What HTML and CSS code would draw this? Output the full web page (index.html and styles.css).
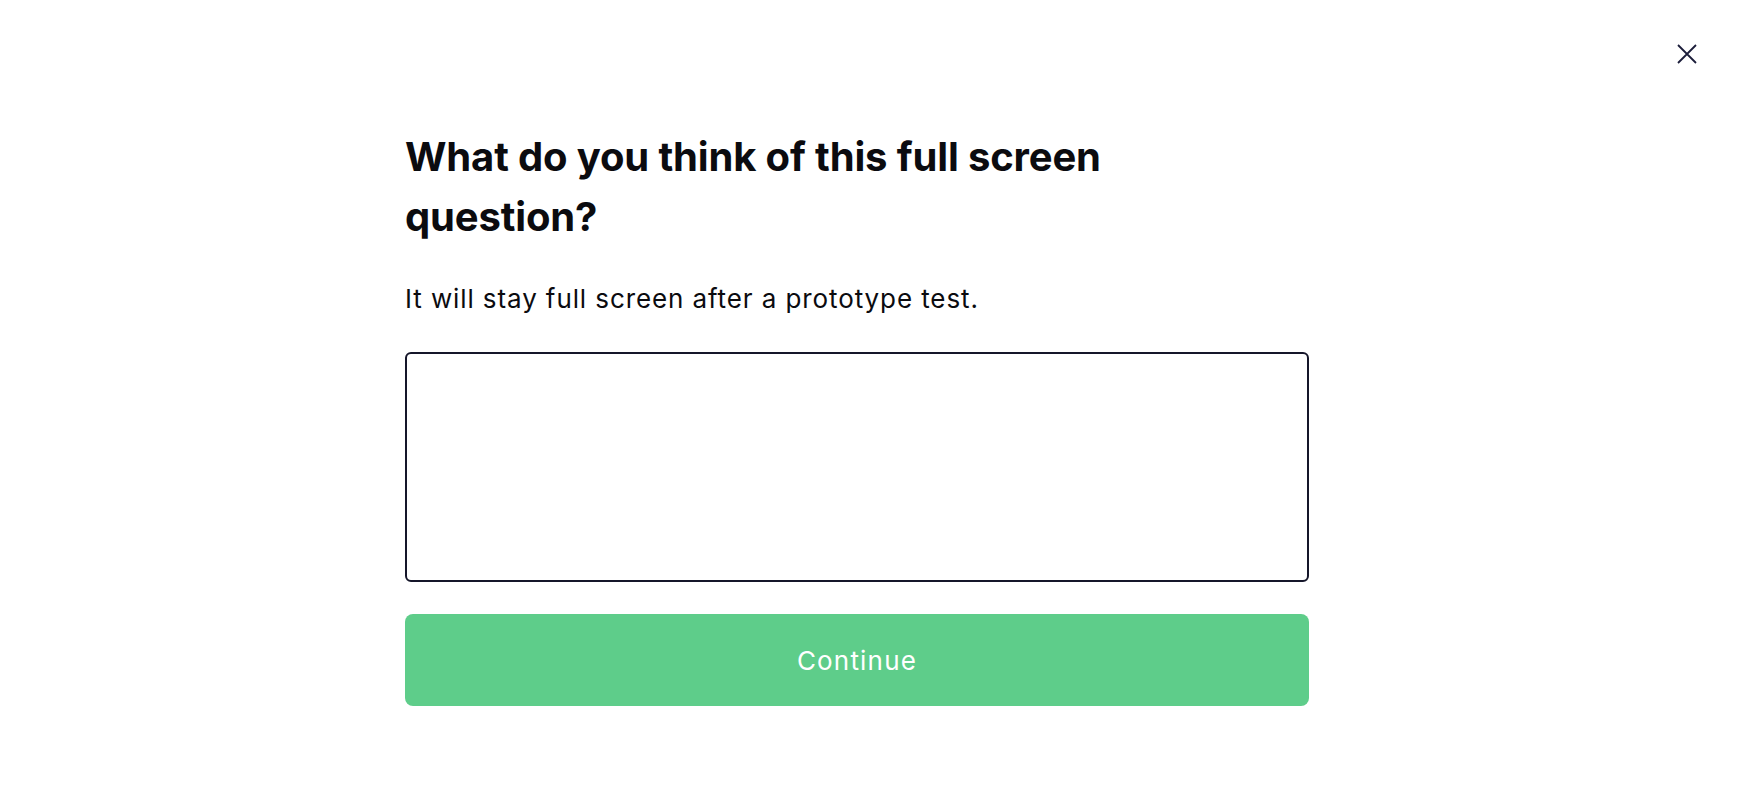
FILE: index.html
```html
<!DOCTYPE html>
<html lang="en">
<head>
<meta charset="utf-8">
<title>Full screen question</title>
<link rel="stylesheet" href="styles.css">
</head>
<body>
<div class="page">
  <button class="close" aria-label="Close">
    <svg width="22" height="22" viewBox="0 0 22 22" fill="none"><path d="M2 2L20 20M20 2L2 20" stroke="#1b1d3a" stroke-width="1.8"/></svg>
  </button>
  <main class="content">
    <h1 class="title">What do you think of this full screen question?</h1>
    <p class="subtitle">It will stay full screen after a prototype test.</p>
    <textarea class="answer"></textarea>
    <button class="continue">Continue</button>
  </main>
</div>
</body>
</html>
```
FILE: styles.css
```css
* { box-sizing: border-box; }
html, body { margin: 0; padding: 0; background: #fff; }
body { font-family: Inter, "Noto Sans", sans-serif; color: #0b0b0f; }
.page { position: relative; width: 1744px; height: 808px; }
.close {
  position: absolute; top: 43px; right: 46px;
  width: 22px; height: 22px; padding: 0; border: 0; background: none; cursor: pointer;
}
.close svg { display: block; }
.content {
  display: flex; flex-direction: column; align-items: flex-start;
  width: 904px; margin-left: 405px; padding-top: 127px;
}
.title {
  margin: 0; width: 740px;
  font-size: 40px; line-height: 60px; font-weight: 700; letter-spacing: -0.15px;
}
.subtitle {
  margin: 34px 0 0; font-size: 26px; line-height: 36px; font-weight: 400; letter-spacing: 0.9px;
}
.answer {
  margin-top: 35px; width: 904px; height: 230px;
  border: 2px solid #15162a; border-radius: 6px; resize: none; outline: none;
  font: inherit;
}
.continue {
  margin-top: 32px; width: 904px; height: 92px;
  border: 0; border-radius: 8px; background: #5ecd8a; color: #fff;
  font-family: Inter, sans-serif; font-size: 26px; font-weight: 400; letter-spacing: 1.2px;
  padding-top: 1px;
}
```
